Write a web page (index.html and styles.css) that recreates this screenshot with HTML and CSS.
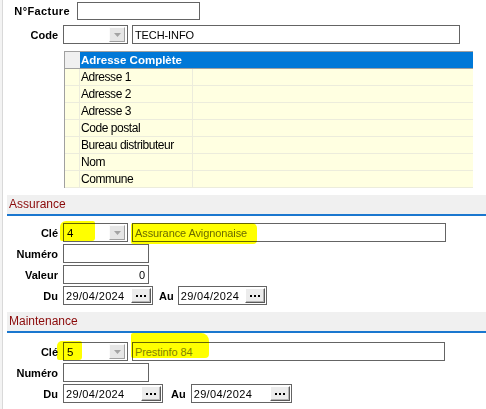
FILE: index.html
```html
<!DOCTYPE html>
<html lang="fr">
<head>
<meta charset="utf-8">
<title>Fiche</title>
<link rel="stylesheet" href="styles.css">
</head>
<body>
<div class="page">
  <div class="row r-facture">
    <span class="lbl">N°Facture</span>
    <div class="field w-facture"></div>
  </div>
  <div class="row r-code">
    <span class="lbl">Code</span>
    <div class="combo"><span class="combo-val"></span><span class="combo-btn"><svg width="7" height="4" viewBox="0 0 7 4"><path d="M0 0H7L3.5 4Z" fill="#a3a3a3"/></svg></span></div>
    <div class="field desc desc-code">TECH-INFO</div>
  </div>

  <div class="grid">
    <div class="g-row g-head"><div class="g-rh"></div><div class="g-hcell">Adresse Complète</div></div>
    <div class="g-row"><div class="g-rh"></div><div class="g-c1">Adresse 1</div><div class="g-c2"></div></div>
    <div class="g-row"><div class="g-rh"></div><div class="g-c1">Adresse 2</div><div class="g-c2"></div></div>
    <div class="g-row"><div class="g-rh"></div><div class="g-c1">Adresse 3</div><div class="g-c2"></div></div>
    <div class="g-row"><div class="g-rh"></div><div class="g-c1">Code postal</div><div class="g-c2"></div></div>
    <div class="g-row"><div class="g-rh"></div><div class="g-c1">Bureau distributeur</div><div class="g-c2"></div></div>
    <div class="g-row"><div class="g-rh"></div><div class="g-c1">Nom</div><div class="g-c2"></div></div>
    <div class="g-row"><div class="g-rh"></div><div class="g-c1">Commune</div><div class="g-c2"></div></div>
  </div>

  <div class="band band-a">Assurance</div>
  <div class="row sec-first">
    <span class="lbl">Clé</span>
    <div class="combo"><span class="combo-val">4</span><span class="combo-btn"><svg width="7" height="4" viewBox="0 0 7 4"><path d="M0 0H7L3.5 4Z" fill="#a3a3a3"/></svg></span></div>
    <div class="field desc desc-a dis">Assurance Avignonaise</div>
    <span class="mark mark-a1"></span>
    <span class="mark mark-a2"></span>
  </div>
  <div class="row sec-next">
    <span class="lbl">Numéro</span>
    <div class="field w-num"></div>
  </div>
  <div class="row sec-next">
    <span class="lbl">Valeur</span>
    <div class="field w-num num-right">0</div>
  </div>
  <div class="row sec-next">
    <span class="lbl">Du</span>
    <div class="field date date-a"><span class="dtxt">29/04/2024</span><span class="dbtn"><svg width="10" height="2" viewBox="0 0 10 2"><rect x="0" y="0" width="2" height="2"/><rect x="4" y="0" width="2" height="2"/><rect x="8" y="0" width="2" height="2"/></svg></span></div>
    <span class="au au-a">Au</span>
    <div class="field date date-a2"><span class="dtxt">29/04/2024</span><span class="dbtn"><svg width="10" height="2" viewBox="0 0 10 2"><rect x="0" y="0" width="2" height="2"/><rect x="4" y="0" width="2" height="2"/><rect x="8" y="0" width="2" height="2"/></svg></span></div>
  </div>

  <div class="band band-m">Maintenance</div>
  <div class="row sec-first-m">
    <span class="lbl">Clé</span>
    <div class="combo"><span class="combo-val">5</span><span class="combo-btn"><svg width="7" height="4" viewBox="0 0 7 4"><path d="M0 0H7L3.5 4Z" fill="#a3a3a3"/></svg></span></div>
    <div class="field desc desc-m dis2">Prestinfo 84</div>
    <span class="mark mark-m1"></span>
    <span class="mark mark-m2"></span>
  </div>
  <div class="row sec-next">
    <span class="lbl">Numéro</span>
    <div class="field w-num"></div>
  </div>
  <div class="row sec-next">
    <span class="lbl">Du</span>
    <div class="field date date-m"><span class="dtxt">29/04/2024</span><span class="dbtn"><svg width="10" height="2" viewBox="0 0 10 2"><rect x="0" y="0" width="2" height="2"/><rect x="4" y="0" width="2" height="2"/><rect x="8" y="0" width="2" height="2"/></svg></span></div>
    <span class="au au-m">Au</span>
    <div class="field date date-m2"><span class="dtxt">29/04/2024</span><span class="dbtn"><svg width="10" height="2" viewBox="0 0 10 2"><rect x="0" y="0" width="2" height="2"/><rect x="4" y="0" width="2" height="2"/><rect x="8" y="0" width="2" height="2"/></svg></span></div>
  </div>
</div>
</body>
</html>
```

FILE: styles.css
```css
html, body {
  margin: 0;
  padding: 0;
}
body {
  width: 486px;
  height: 409px;
  overflow: hidden;
  font-family: "Liberation Sans", Arial, sans-serif;
  font-size: 11px;
  color: #000;
  background: linear-gradient(to right, #f3f3f3 0, #f3f3f3 2px, #d9d9d9 2px, #d9d9d9 3px, #ffffff 3px);
}
.page {
  padding-top: 2px;
}
.row {
  position: relative;
  display: flex;
  align-items: center;
  height: 19px;
}
.lbl {
  width: 58px;
  margin-right: 5px;
  text-align: right;
  font-weight: bold;
  font-size: 11px;
  white-space: nowrap;
}
.r-facture {
  height: 18px;
}
.r-facture .lbl {
  width: 70px;
  margin-right: 7px;
  letter-spacing: 0.4px;
}
.r-code {
  margin-top: 5px;
}
.field {
  box-sizing: border-box;
  height: 100%;
  border: 1px solid #646464;
  background: #fff;
  font-size: 11px;
  padding-left: 2px;
  display: flex;
  align-items: center;
  white-space: nowrap;
}
.w-facture {
  width: 123px;
}
.combo {
  box-sizing: border-box;
  width: 65px;
  height: 19px;
  border: 1px solid #646464;
  background: #fff;
  display: flex;
  align-items: center;
  padding: 0 2px 0 3px;
  font-size: 11.5px;
}
.combo-val {
  flex: 1;
}
.combo-btn {
  box-sizing: border-box;
  width: 16px;
  height: 15px;
  background: #e6e6e6;
  border: 1px solid;
  border-color: #fbfbfb #a0a0a0 #a0a0a0 #fbfbfb;
  display: flex;
  align-items: center;
  justify-content: center;
}
.desc {
  margin-left: 4px;
  letter-spacing: -0.1px;
}
.desc-code {
  width: 328px;
}
.desc-a {
  width: 314px;
}
.desc-m {
  width: 313px;
}
.dis {
  color: #6a6a6a;
}
.dis2 {
  color: #828282;
}

/* grid */
.grid {
  margin-top: 7px;
  margin-left: 64px;
  width: 408px;
  border-top: 1px solid #a0a0a0;
  border-left: 1px solid #a0a0a0;
}
.g-row {
  display: flex;
  box-sizing: border-box;
  height: 17px;
  border-bottom: 1px solid #ececdc;
  background: #ffffe1;
}
.g-head {
  border-bottom: 1px solid #a0a0a0;
}
.g-rh {
  box-sizing: border-box;
  width: 15px;
  border-right: 1px solid #ececdc;
}
.g-head .g-rh {
  background: #f0f0f0;
  border-right: none;
}
.g-hcell {
  flex: 1;
  background: #0078d7;
  color: #fff;
  font-weight: bold;
  font-size: 11.5px;
  line-height: 16px;
  padding-left: 1px;
}
.g-c1 {
  box-sizing: border-box;
  width: 113px;
  border-right: 1px solid #ececdc;
  font-size: 12px;
  letter-spacing: -0.45px;
  line-height: 16px;
  padding-left: 1px;
  white-space: nowrap;
}
.g-c2 {
  flex: 1;
}

/* section bands */
.band {
  margin-left: 7px;
  height: 19px;
  line-height: 19px;
  background: #f0f0f0;
  border-bottom: 2px solid #1a77cf;
  color: #8b0a0a;
  font-size: 12px;
  padding-left: 2px;
}
.band-a {
  margin-top: 7px;
}
.band-m {
  margin-top: 7px;
}
.sec-first {
  margin-top: 7px;
}
.sec-first-m {
  margin-top: 9px;
}
.sec-next {
  margin-top: 2px;
}
.w-num {
  width: 86px;
}
.num-right {
  justify-content: flex-end;
  padding-right: 3px;
}
.date {
  justify-content: space-between;
  padding-left: 2px;
  padding-right: 1px;
}
.dtxt {
  letter-spacing: 0.35px;
}
.date-a {
  width: 90px;
}
.date-a2 {
  width: 89px;
}
.date-m {
  width: 100px;
}
.date-m2 {
  width: 101px;
}
.dbtn {
  box-sizing: border-box;
  width: 20px;
  height: 15px;
  background: #ececec;
  border: 1px solid;
  border-color: #ffffff #5a5a5a #5a5a5a #ffffff;
  box-shadow: inset -1px -1px 0 #b4b4b4;
  display: flex;
  align-items: center;
  justify-content: center;
}
.au {
  font-weight: bold;
  font-size: 11px;
}
.au-a {
  margin: 0 4px 0 6px;
}
.au-m {
  margin: 0 5px 0 8px;
}

/* highlighter marks lying over the fields */
.mark {
  position: absolute;
  background: #ffff00;
  mix-blend-mode: multiply;
  pointer-events: none;
}
.mark-a1 {
  left: 60px;
  top: -2px;
  width: 35px;
  height: 20px;
  border-radius: 6px 2px 3px 2px;
}
.mark-a2 {
  left: 131px;
  top: 0;
  width: 126px;
  height: 21px;
  border-radius: 2px 5px 4px 2px;
}
.mark-m1 {
  left: 57px;
  top: -1px;
  width: 25px;
  height: 19px;
  border-radius: 5px 2px 3px 2px;
}
.mark-m2 {
  left: 131px;
  top: -9px;
  width: 78px;
  height: 25px;
  border-radius: 2px 8px 4px 2px;
}
```
